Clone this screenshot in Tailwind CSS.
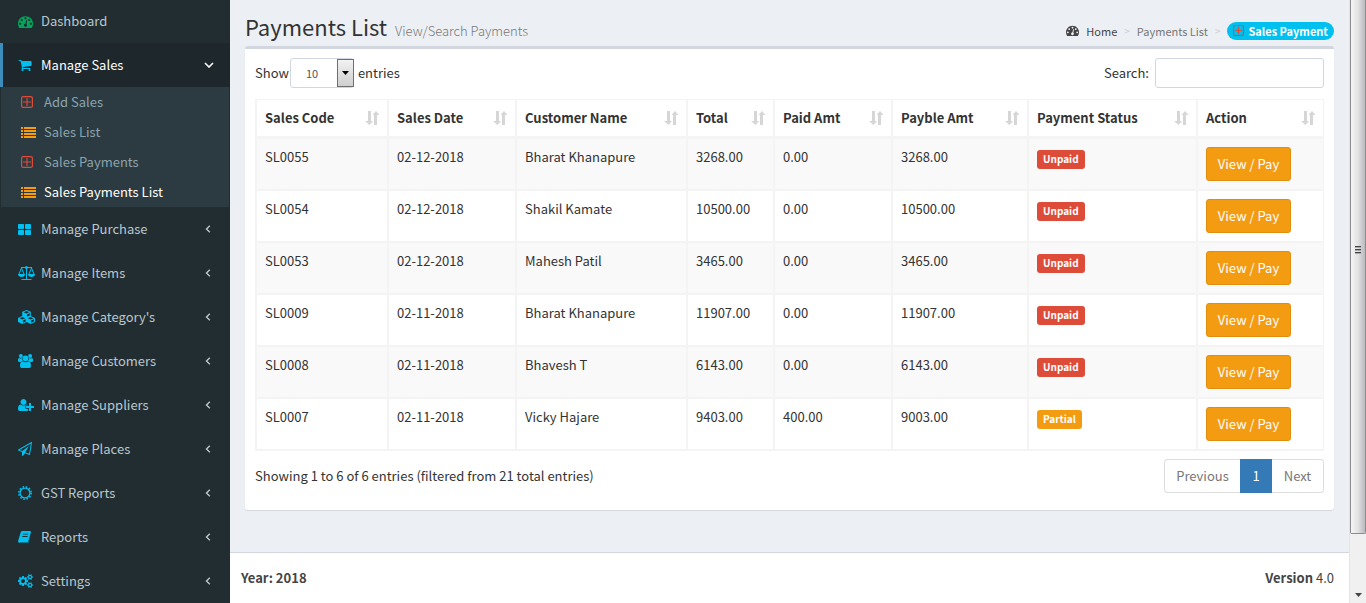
<!DOCTYPE html>
<html lang="en">
<head>
<meta charset="utf-8">
<title>Payments List</title>
<script src="https://cdn.jsdelivr.net/npm/@tailwindcss/browser@4"></script>
</head>
<body class="min-h-screen flex bg-[#ecf0f5] text-[#333] text-[13px] leading-5 font-['Noto_Sans_CJK_SC','Source_Sans_Pro',sans-serif]">

<svg class="hidden" aria-hidden="true">
  <symbol id="dash" viewBox="0 0 1792 1792"><path d="M384 1152q0-53-37.500-90.500t-90.500-37.500-90.500 37.500-37.500 90.500 37.500 90.500 90.500 37.500 90.500-37.500 37.500-90.500zm192-448q0-53-37.500-90.500t-90.500-37.500-90.500 37.500-37.500 90.500 37.500 90.500 90.500 37.500 90.500-37.500 37.500-90.500zm428 481l101-382q6-26-7.500-48.500t-38.500-29.500-48 6.500-30 39.500l-101 382q-60 5-107 43.500t-63 98.500q-20 77 20 146t117 89 146-20 89-117q16-60-6-117t-72-91zm660-33q0-53-37.500-90.500t-90.500-37.500-90.500 37.500-37.500 90.500 37.500 90.500 90.500 37.500 90.500-37.500 37.500-90.500zm-640-640q0-53-37.500-90.500t-90.500-37.500-90.500 37.500-37.500 90.500 37.500 90.500 90.500 37.500 90.500-37.500 37.500-90.500zm448 192q0-53-37.500-90.500t-90.500-37.500-90.500 37.500-37.500 90.500 37.500 90.500 90.500 37.500 90.500-37.500 37.500-90.500zm320 448q0 261-141 483-19 29-54 29h-1402q-35 0-54-29-141-221-141-483 0-182 71-348t191-286 286-191 348-71 348 71 286 191 191 286 71 348z"/></symbol>
  <symbol id="cart" viewBox="0 0 1792 1792"><path d="M704 1536q0 52-38 90t-90 38-90-38-38-90 38-90 90-38 90 38 38 90zm896 0q0 52-38 90t-90 38-90-38-38-90 38-90 90-38 90 38 38 90zm128-1088v512q0 24-16.500 42.500t-40.500 21.500l-1044 122q13 60 13 70 0 16-24 64h920q26 0 45 19t19 45-19 45-45 19h-1024q-26 0-45-19t-19-45q0-11 8-31.500t16-36 21.500-40 15.500-29.500l-177-823h-204q-26 0-45-19t-19-45 19-45 45-19h256q16 0 28.500 6.500t19.500 15.500 13 24.500 8 26 5.500 29.500 4.500 26h1201q26 0 45 19t19 45z"/></symbol>
  <symbol id="plus" viewBox="0 0 12 12"><rect x=".6" y=".6" width="10.800" height="10.800" rx="1.500" fill="none" stroke="currentColor" stroke-width="1.200"/><path d="M6 2v8M2 6h8" stroke="currentColor" stroke-width="1.100"/></symbol>
  <symbol id="list" viewBox="0 0 15 11"><path d="M0 0h2v2H0zM3 0h12v2H3zM0 3h2v2H0zM3 3h12v2H3zM0 6h2v2H0zM3 6h12v2H3zM0 9h2v2H0zM3 9h12v2H3z"/></symbol>
  <symbol id="large" viewBox="0 0 13 11"><rect width="6" height="5" rx=".8"/><rect x="7" width="6" height="5" rx=".8"/><rect y="6" width="6" height="5" rx=".8"/><rect x="7" y="6" width="6" height="5" rx=".8"/></symbol>
  <symbol id="scale" viewBox="0 0 17 14"><path d="M3 1.500h11M8.500 1v12M3.500 13.500h10M3.500 2L.8 8.500M3.500 2l2.700 6.500M13.500 2l-2.700 6.500M13.500 2l2.700 6.500" fill="none" stroke="currentColor"/><circle cx="8.500" cy="1.500" r="1.500"/><path d="M0 8h7q-.3 3-3.500 3T0 8zM10 8h7q-.3 3-3.500 3T10 8z"/></symbol>
  <symbol id="cubes" viewBox="0 0 17 14"><path fill-rule="evenodd" d="M8.500 0l4.300 1.700v4.400l3.800 1.600.4.700v3.500l-4.400 2.100-4.100-2-4.100 2L0 11.900V8.400l.4-.7 3.800-1.600V1.700zM8.500 1.100L5.700 2.200l2.800 1.200 2.800-1.200zM9 4.400v2.300L11.800 5.500V3.200zM4.400 7L1.600 8.200l2.800 1.200 2.800-1.200zM4.900 10.400v2.300l2.800-1.300V9.200zM12.600 7L9.800 8.200l2.800 1.200 2.800-1.200zM13.100 10.400v2.300l2.800-1.300V9.200z"/></symbol>
  <symbol id="users" viewBox="0 0 15 14"><circle cx="2.900" cy="2" r="2"/><circle cx="12.100" cy="2" r="2"/><circle cx="7.500" cy="4.300" r="2.900"/><path d="M0 7V5.500Q0 4 1.200 4q1.600.8 2.800 0 0 1.900 1.200 2.800Q3.700 6.800 3 8H1.500Q0 8 0 7zM15 7V5.500Q15 4 13.800 4q-1.600.8-2.800 0 0 1.900-1.200 2.800 1.500 0 2.200 1.200h1.500Q15 8 15 7zM2 12Q2 7.500 4.400 7.200q3.100 2 6.200 0Q13 7.500 13 12q0 2-2 2H4q-2 0-2-2z"/></symbol>
  <symbol id="uplus" viewBox="0 0 2048 1792"><path d="M704 896q-159 0-271.500-112.500t-112.500-271.500 112.500-271.500 271.500-112.500 271.500 112.500 112.500 271.500-112.500 271.500-271.500 112.500zm960 128h352q13 0 22.500 9.500t9.500 22.500v192q0 13-9.500 22.500t-22.500 9.500h-352v352q0 13-9.500 22.500t-22.500 9.500h-192q-13 0-22.500-9.500t-9.500-22.500v-352h-352q-13 0-22.500-9.500t-9.500-22.500v-192q0-13 9.500-22.500t22.500-9.500h352v-352q0-13 9.500-22.500t22.500-9.500h192q13 0 22.500 9.500t9.500 22.500v352zm-736 224q0 52 38 90t90 38h256v238q-68 50-171 50h-874q-121 0-194-69t-73-190q0-53 3.500-103.500t14-109 26.500-108.500 43-97.500 62-81 85.500-53.500 111.500-20q19 0 39 17 79 61 154.500 91.500t164.500 30.500 164.500-30.500 154.500-91.500q20-17 39-17 132 0 217 96h-223q-52 0-90 38t-38 90v192z"/></symbol>
  <symbol id="plane" viewBox="0 0 1792 1792"><path d="M1764 11q33 24 27 64l-256 1536q-5 29-32 45-14 8-31 8-11 0-24-5l-527-215-298 327q-18 21-47 21-14 0-23-4-19-7-30-23.500t-11-36.500v-452l-472-193q-37-14-40-55-3-39 32-59l1664-960q35-21 68 2zm-342 1499l221-1323-1434 827 336 137 863-639-478 797z"/></symbol>
  <symbol id="sun" viewBox="0 0 14 14"><circle cx="7" cy="7" r="4.900" fill="none" stroke="currentColor" stroke-width="1.300"/><circle cx="7" cy="7" r="6.200" fill="none" stroke="currentColor" stroke-width="1.600" stroke-dasharray="1.500 1.746"/></symbol>
  <symbol id="book" viewBox="0 0 13 12"><path fill-rule="evenodd" d="M4.500 0H12q1.300.3.900 1.600L10.500 9.800Q10.200 11 9 11H2.200q-.9 0-.8.6H9.600q1 0 1.300-.9L13 3.500 10.800 11.400q-.2.600-1 .6H2Q0 12 0 10.200L2.700 1.300Q3.200 0 4.500 0zM5 2.700l-.2.900h5.400l.2-.9zM4.300 5l-.2.900h5.400l.2-.9z"/></symbol>
  <symbol id="cogs" viewBox="0 0 1920 1792"><path d="M896 896q0-106-75-181t-181-75-181 75-75 181 75 181 181 75 181-75 75-181zm768 512q0-52-38-90t-90-38-90 38-38 90q0 53 37.500 90.500t90.500 37.500 90.500-37.500 37.500-90.500zm0-1024q0-52-38-90t-90-38-90 38-38 90q0 53 37.500 90.500t90.500 37.500 90.500-37.500 37.500-90.500zm-384 421v185q0 10-7 19.500t-16 10.500l-155 24q-11 35-32 76 34 48 90 115 7 11 7 20 0 12-7 19-23 30-82.500 89.500t-78.500 59.500q-11 0-21-7l-115-90q-37 19-77 31-11 108-23 155-7 24-30 24h-186q-11 0-20-7.500t-10-17.500l-23-153q-34-10-75-31l-118 89q-7 7-20 7-11 0-21-8-144-133-144-160 0-9 7-19 10-14 41-53t47-61q-23-44-35-82l-152-24q-10-1-17-9.500t-7-19.500v-185q0-10 7-19.500t16-10.500l155-24q11-35 32-76-34-48-90-115-7-11-7-20 0-12 7-20 22-30 82-89t79-59q11 0 21 7l115 90q34-18 77-32 11-108 23-154 7-24 30-24h186q11 0 20 7.500t10 17.500l23 153q34 10 75 31l118-89q8-7 20-7 11 0 21 8 144 133 144 160 0 8-7 19-12 16-42 54t-45 60q23 48 34 82l152 23q10 2 17 10.500t7 19.500zm640 533v140q0 16-149 31-12 27-30 52 51 113 51 138 0 4-4 7-122 71-124 71-8 0-46-47t-52-68q-20 2-30 2t-30-2q-14 21-52 68t-46 47q-2 0-124-71-4-3-4-7 0-25 51-138-18-25-30-52-149-15-149-31v-140q0-16 149-31 13-29 30-52-51-113-51-138 0-4 4-7 4-2 35-20t59-34 30-16q8 0 46 46.500t52 67.500q20-2 30-2t30 2q51-71 92-112l6-2q4 0 124 70 4 3 4 7 0 25-51 138 17 23 30 52 149 15 149 31zm0-1024v140q0 16-149 31-12 27-30 52 51 113 51 138 0 4-4 7-122 71-124 71-8 0-46-47t-52-68q-20 2-30 2t-30-2q-14 21-52 68t-46 47q-2 0-124-71-4-3-4-7 0-25 51-138-18-25-30-52-149-15-149-31v-140q0-16 149-31 13-29 30-52-51-113-51-138 0-4 4-7 4-2 35-20t59-34 30-16q8 0 46 46.500t52 67.500q20-2 30-2t30 2q51-71 92-112l6-2q4 0 124 70 4 3 4 7 0 25-51 138 17 23 30 52 149 15 149 31z"/></symbol>
  <symbol id="left" viewBox="0 0 6 8"><path d="M4.800.8L1.500 4l3.300 3.200" fill="none" stroke="currentColor" stroke-width="1.400"/></symbol>
  <symbol id="down" viewBox="0 0 10 6"><path d="M1 1l4 4 4-4" fill="none" stroke="currentColor" stroke-width="1.600"/></symbol>
  <symbol id="sort" viewBox="0 0 15 14"><path d="M3 0h3v10h2l-3.500 4L0 10h3zM9 14h3V4h2.500L11 0 7.500 4H9z"/></symbol>
</svg>

<nav class="w-[230px] shrink-0 bg-[#222d32] text-[#b8c7ce] [&_svg]:fill-current">
  <a href="#" class="flex items-center h-[43px] pb-px pl-[18px] pr-[19px]"><span class="w-[23px]"><svg class="size-[15px] text-[#00a65a]"><use href="#dash"/></svg></span>Dashboard</a>
  <a href="#" class="flex items-center h-11 pl-[15px] pr-4 border-l-3 border-[#3c8dbc] bg-[#1e282c] text-white"><span class="w-[23px]"><svg class="size-[14px] text-[#00c0ef]"><use href="#cart"/></svg></span><span class="flex-1">Manage Sales</span><svg class="w-[10px] h-[6px]"><use href="#down"/></svg></a>
  <div class="mx-px bg-[#2c3b41] text-[#8aa4af]">
    <a href="#" class="flex items-center h-[30px] pl-5"><span class="w-[23px]"><svg class="size-3 text-[#dd4b39]"><use href="#plus"/></svg></span>Add Sales</a>
    <a href="#" class="flex items-center h-[30px] pl-5"><span class="w-[23px]"><svg class="w-[15px] h-[11px] text-[#f39c12]"><use href="#list"/></svg></span>Sales List</a>
    <a href="#" class="flex items-center h-[30px] pl-5"><span class="w-[23px]"><svg class="size-3 text-[#dd4b39]"><use href="#plus"/></svg></span>Sales Payments</a>
    <a href="#" class="flex items-center h-[30px] pl-5 text-white"><span class="w-[23px]"><svg class="w-[15px] h-[11px] text-[#f39c12]"><use href="#list"/></svg></span>Sales Payments List</a>
  </div>
  <a href="#" class="flex items-center h-11 pl-[18px] pr-[19px]"><span class="w-[23px]"><svg class="w-[13px] h-[11px] text-[#00c0ef]"><use href="#large"/></svg></span><span class="flex-1">Manage Purchase</span><svg class="w-[6px] h-2"><use href="#left"/></svg></a>
  <a href="#" class="flex items-center h-11 pl-[18px] pr-[19px]"><span class="w-[23px]"><svg class="w-[17px] h-[14px] text-[#00c0ef]"><use href="#scale"/></svg></span><span class="flex-1">Manage Items</span><svg class="w-[6px] h-2"><use href="#left"/></svg></a>
  <a href="#" class="flex items-center h-11 pl-[18px] pr-[19px]"><span class="w-[23px]"><svg class="w-[17px] h-[14px] text-[#00c0ef]"><use href="#cubes"/></svg></span><span class="flex-1">Manage Category's</span><svg class="w-[6px] h-2"><use href="#left"/></svg></a>
  <a href="#" class="flex items-center h-11 pl-[18px] pr-[19px]"><span class="w-[23px]"><svg class="w-[15px] h-[14px] text-[#00c0ef]"><use href="#users"/></svg></span><span class="flex-1">Manage Customers</span><svg class="w-[6px] h-2"><use href="#left"/></svg></a>
  <a href="#" class="flex items-center h-11 pl-[18px] pr-[19px]"><span class="w-[23px]"><svg class="w-4 h-[14px] text-[#00c0ef]"><use href="#uplus"/></svg></span><span class="flex-1">Manage Suppliers</span><svg class="w-[6px] h-2"><use href="#left"/></svg></a>
  <a href="#" class="flex items-center h-11 pl-[18px] pr-[19px]"><span class="w-[23px]"><svg class="size-[14px] text-[#00c0ef]"><use href="#plane"/></svg></span><span class="flex-1">Manage Places</span><svg class="w-[6px] h-2"><use href="#left"/></svg></a>
  <a href="#" class="flex items-center h-11 pl-[18px] pr-[19px]"><span class="w-[23px]"><svg class="size-[14px] text-[#00c0ef]"><use href="#sun"/></svg></span><span class="flex-1">GST Reports</span><svg class="w-[6px] h-2"><use href="#left"/></svg></a>
  <a href="#" class="flex items-center h-11 pl-[18px] pr-[19px]"><span class="w-[23px]"><svg class="w-[13px] h-3 text-[#00c0ef]"><use href="#book"/></svg></span><span class="flex-1">Reports</span><svg class="w-[6px] h-2"><use href="#left"/></svg></a>
  <a href="#" class="flex items-center h-11 pl-[18px] pr-[19px]"><span class="w-[23px]"><svg class="w-[15px] h-[14px] text-[#00c0ef]"><use href="#cogs"/></svg></span><span class="flex-1">Settings</span><svg class="w-[6px] h-2"><use href="#left"/></svg></a>
</nav>

<div class="flex-1 min-w-0 flex flex-col">
  <main class="flex-1 px-[15px]">
    <header class="flex justify-between pt-[14px] h-[46px]">
      <h1 class="text-[22px] leading-6 whitespace-nowrap">Payments List<small class="text-[13px] text-[#777] font-light pl-2">View/Search Payments</small></h1>
      <nav aria-label="Breadcrumb" class="flex items-center h-[33px] text-[11px] text-[#777]">
        <a href="#" class="flex items-center text-[#444]"><svg class="size-[13px] mr-[7px] fill-current"><use href="#dash"/></svg>Home</a>
        <span class="mx-[7px] text-[10px] text-[#ccc]">&gt;</span><a href="#">Payments List</a>
        <span class="mx-[7px] text-[10px] text-[#ccc]">&gt;</span><span class="flex items-center h-[18px] rounded-full bg-[#00c0ef] text-white font-bold px-[6px]"><svg class="size-[11px] mr-1 text-[#dd4b39]"><use href="#plus"/></svg>Sales Payment</span>
      </nav>
    </header>
    <section class="bg-white border-t-3 border-[#d2d6de] rounded-[3px] shadow-[0_1px_1px_rgba(0,0,0,0.1)] px-[10px] pt-[9px] pb-[17px]">
      <div class="flex justify-between mb-[11px]">
        <label class="flex items-center gap-px">Show
          <span class="relative block w-16 h-[30px]">
            <select class="appearance-none w-full h-full border border-[#d2d6de] rounded-[3px] bg-white text-[11px] text-[#555] pl-[15px]"><option>10</option><option>25</option><option>50</option></select>
            <span class="absolute right-0 inset-y-px w-[17px] border border-[#707070] bg-linear-to-b from-[#f2f2f2] to-[#cfcfcf] flex items-center justify-center pointer-events-none"><svg class="w-[7px] h-1" viewBox="0 0 7 4"><path d="M0 0h7L3.500 4z"/></svg></span>
          </span><span class="pl-[3px]">entries</span></label>
        <label class="flex items-center gap-[6px]">Search:<input type="search" class="w-[169px] h-[30px] border border-[#d2d6de] rounded-[3px] bg-white px-2"></label>
      </div>
      <table class="w-full table-fixed border-separate border-spacing-0 border border-[#f4f4f4] text-left [&_th]:py-2 [&_th]:pl-2 [&_th]:pr-[7px] [&_td]:px-2 [&_td]:py-2 [&_td]:align-top [&_td]:border [&_td]:border-[#f4f4f4] [&_th]:border-x [&_th]:border-b-2 [&_th]:border-[#f4f4f4] [&_tr>*:last-child]:border-r-0 [&_tbody_tr:nth-child(odd)]:bg-[#f9f9f9] [&_th>div]:flex [&_th>div]:justify-between [&_th>div]:items-center [&_th>div]:whitespace-nowrap [&_th_svg]:w-[15px] [&_th_svg]:h-[14px] [&_th_svg]:fill-[#d6d6d6] [&_td_span]:block [&_td_span]:w-fit [&_td_span]:mt-[3px] [&_td_span]:h-[19px] [&_td_span]:leading-[17px] [&_td_span]:px-[6px] [&_td_span]:rounded-[3px] [&_td_span]:text-[10px] [&_td_span]:font-bold [&_td_span]:text-white [&_button]:block">
        <colgroup><col class="w-[132px]"><col class="w-[128px]"><col class="w-[171px]"><col class="w-[87px]"><col class="w-[118px]"><col class="w-[136px]"><col class="w-[169px]"><col class="w-[126px]"></colgroup>
        <thead><tr>
          <th><div>Sales Code<svg><use href="#sort"/></svg></div></th><th><div>Sales Date<svg><use href="#sort"/></svg></div></th><th><div>Customer Name<svg><use href="#sort"/></svg></div></th><th><div>Total<svg><use href="#sort"/></svg></div></th><th><div>Paid Amt<svg><use href="#sort"/></svg></div></th><th><div>Payble Amt<svg><use href="#sort"/></svg></div></th><th><div>Payment Status<svg><use href="#sort"/></svg></div></th><th><div>Action<svg><use href="#sort"/></svg></div></th>
        </tr></thead>
        <tbody>
          <tr><td>SL0055</td><td>02-12-2018</td><td>Bharat Khanapure</td><td>3268.00</td><td>0.00</td><td>3268.00</td><td><span class="bg-[#dd4b39]">Unpaid</span></td><td><button class="w-[85px] h-[34px] rounded-[3px] border border-[#e08e0b] bg-[#f39c12] text-white">View / Pay</button></td></tr>
          <tr><td>SL0054</td><td>02-12-2018</td><td>Shakil Kamate</td><td>10500.00</td><td>0.00</td><td>10500.00</td><td><span class="bg-[#dd4b39]">Unpaid</span></td><td><button class="w-[85px] h-[34px] rounded-[3px] border border-[#e08e0b] bg-[#f39c12] text-white">View / Pay</button></td></tr>
          <tr><td>SL0053</td><td>02-12-2018</td><td>Mahesh Patil</td><td>3465.00</td><td>0.00</td><td>3465.00</td><td><span class="bg-[#dd4b39]">Unpaid</span></td><td><button class="w-[85px] h-[34px] rounded-[3px] border border-[#e08e0b] bg-[#f39c12] text-white">View / Pay</button></td></tr>
          <tr><td>SL0009</td><td>02-11-2018</td><td>Bharat Khanapure</td><td>11907.00</td><td>0.00</td><td>11907.00</td><td><span class="bg-[#dd4b39]">Unpaid</span></td><td><button class="w-[85px] h-[34px] rounded-[3px] border border-[#e08e0b] bg-[#f39c12] text-white">View / Pay</button></td></tr>
          <tr><td>SL0008</td><td>02-11-2018</td><td>Bhavesh T</td><td>6143.00</td><td>0.00</td><td>6143.00</td><td><span class="bg-[#dd4b39]">Unpaid</span></td><td><button class="w-[85px] h-[34px] rounded-[3px] border border-[#e08e0b] bg-[#f39c12] text-white">View / Pay</button></td></tr>
          <tr><td>SL0007</td><td>02-11-2018</td><td>Vicky Hajare</td><td>9403.00</td><td>400.00</td><td>9003.00</td><td><span class="bg-[#f39c12]">Partial</span></td><td><button class="w-[85px] h-[34px] rounded-[3px] border border-[#e08e0b] bg-[#f39c12] text-white">View / Pay</button></td></tr>
        </tbody>
      </table>
      <div class="flex justify-between items-center mt-2">
        <p>Showing 1 to 6 of 6 entries (filtered from 21 total entries)</p>
        <div class="flex h-[34px] text-[#777]">
          <button class="w-[76px] border border-r-0 border-[#ddd] rounded-l">Previous</button><button class="w-8 bg-[#337ab7] text-white">1</button><button class="w-[52px] border border-l-0 border-[#ddd] rounded-r">Next</button>
        </div>
      </div>
    </section>
  </main>
  <footer class="flex justify-between items-center h-[51px] border-t border-[#d2d6de] bg-white pl-[11px] pr-[15px] text-[#444]"><strong>Year: 2018</strong><span><b>Version</b> 4.0</span></footer>
</div>

<div aria-hidden="true" class="w-[17px] shrink-0 bg-[#f0f0f0] border-l border-[#e3e3e8] flex flex-col justify-between items-center">
  <div class="w-full h-[534px] border-x border-b border-[#8c8c8c] rounded-b-[2px] bg-linear-to-r from-[#f5f5f5] via-[#e2e2e4] to-[#b9b9bf] flex flex-col items-center justify-center gap-px pb-[34px]">
    <i class="block w-[6px] h-[2px] border-t border-[#444] bg-[#aaa]"></i><i class="block w-[6px] h-[2px] border-t border-[#444] bg-[#aaa]"></i><i class="block w-[6px] h-[2px] border-t border-[#444] bg-[#aaa]"></i>
  </div>
  <svg class="w-[7px] h-1 mb-[6px]" viewBox="0 0 7 4"><path d="M0 0h7L3.500 4z" fill="#444"/></svg>
</div>
</body>
</html>
